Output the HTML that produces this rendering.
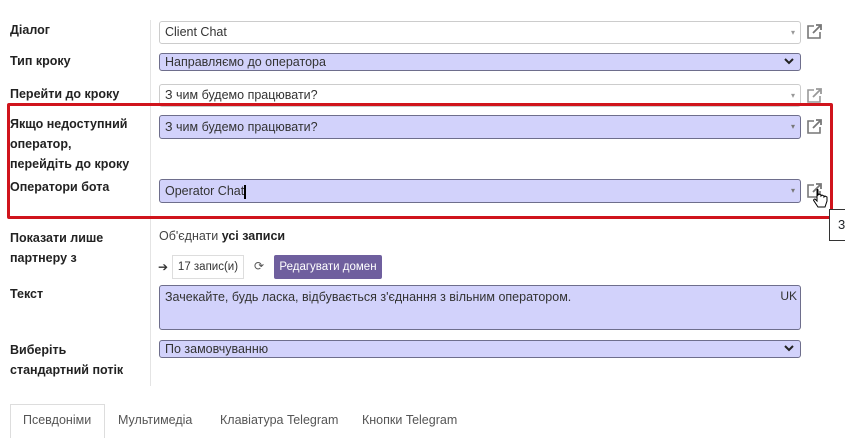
<!DOCTYPE html>
<html><head><meta charset="utf-8"><style>
body{margin:0;width:845px;height:436px;background:#fff;font-family:"Liberation Sans","DejaVu Sans",sans-serif;position:relative;overflow:hidden;color:#212529}
.a{position:absolute}
.l{position:absolute;left:10px;font-weight:bold;font-size:12.5px;color:#222;line-height:20px}
.in{position:absolute;left:159px;width:642px;box-sizing:border-box;font-size:12.5px;padding-left:5px;border:1px solid #ccc;border-radius:3px;background:#fff;color:#333}
.p{background:#d2d2fb;border-color:#6e6e8c}
.dd{position:absolute;right:5px;top:0;font-size:8px;color:#999}
.ext{position:absolute;left:806px;width:17px;height:17px}
.chev{position:absolute;right:6px;top:3px}
</style></head><body>
<div class="a" style="left:150px;top:20px;width:1px;height:366px;background:#e4e4e4"></div>

<div class="l" style="top:20px">Діалог</div>
<div class="l" style="top:51px">Тип кроку</div>
<div class="l" style="top:84px">Перейти до кроку</div>
<div class="l" style="top:114px">Якщо недоступний<br>оператор,<br>перейдіть до кроку</div>
<div class="l" style="top:177px">Оператори бота</div>
<div class="l" style="top:228px">Показати лише<br>партнеру з</div>
<div class="l" style="top:284px">Текст</div>
<div class="l" style="top:340px">Виберіть<br>стандартний потік</div>

<div class="in" style="top:21px;height:23px;line-height:21px">Client Chat<span class="dd" style="line-height:21px">▾</span></div>
<div class="in p" style="top:53px;height:18px;line-height:16px">Направляємо до оператора<svg class="chev" width="10" height="8" viewBox="0 0 10 8"><path d="M1 2l4 4 4-4" stroke="#222" stroke-width="2" fill="none"/></svg></div>
<div class="in" style="top:84px;height:23px;line-height:21px">З чим будемо працювати?<span class="dd" style="line-height:21px">▾</span></div>
<div class="in p" style="top:115px;height:24px;line-height:22px">З чим будемо працювати?<span class="dd" style="line-height:22px;color:#777">▾</span></div>
<div class="in p" style="top:179px;height:24px;line-height:22px">Operator Chat<span style="border-left:2px solid #000;height:14px;display:inline-block;vertical-align:middle"></span><span class="dd" style="line-height:22px;color:#777">▾</span></div>

<svg class="ext" style="top:23px" viewBox="0 0 17 17"><path d="M8 3H2v12h12V9" stroke="#777" stroke-width="1.6" fill="none"/><path d="M7 10l8-8M10 2h5v5" stroke="#777" stroke-width="1.8" fill="none"/></svg>
<svg class="ext" style="top:87px" viewBox="0 0 17 17"><path d="M8 3H2v12h12V9" stroke="#999" stroke-width="1.6" fill="none"/><path d="M7 10l8-8M10 2h5v5" stroke="#999" stroke-width="1.8" fill="none"/></svg>
<svg class="ext" style="top:118px" viewBox="0 0 17 17"><path d="M8 3H2v12h12V9" stroke="#777" stroke-width="1.6" fill="none"/><path d="M7 10l8-8M10 2h5v5" stroke="#777" stroke-width="1.8" fill="none"/></svg>
<svg class="ext" style="top:182px" viewBox="0 0 17 17"><path d="M8 3H2v12h12V9" stroke="#777" stroke-width="1.6" fill="none"/><path d="M7 10l8-8M10 2h5v5" stroke="#777" stroke-width="1.8" fill="none"/></svg>
<svg class="a" style="left:812px;top:188px" width="16" height="22" viewBox="0 0 16 22"><path d="M5 2v11l-2-2c-1 0-2 1-1 2l4 6h7l2-6V9l-2-1-1 1V8l-2-1-1 1V7l-2-1-1 1V2C6 1 5 1 5 2z" fill="#fff" stroke="#000" stroke-width="1"/></svg>

<div class="a" style="left:7px;top:103px;width:820px;height:110px;border:3px solid #d0141c;border-radius:2px"></div>
<div class="a" style="left:829px;top:209px;width:30px;height:30px;border:1px solid #333;background:#fff;font-size:13px;line-height:30px;padding-left:8px">3</div>

<div class="a" style="left:159px;top:229px;font-size:12.5px;color:#444">Об'єднати <b style="color:#222">усі записи</b></div>
<div class="a" style="left:158px;top:260px;font-size:12px;color:#333">➔</div>
<div class="a" style="left:172px;top:255px;width:72px;height:24px;border:1px solid #ddd;box-sizing:border-box;font-size:11.5px;line-height:22px;text-align:center;color:#333">17 запис(и)</div>
<div class="a" style="left:254px;top:259px;font-size:12px;color:#555">⟳</div>
<div class="a" style="left:274px;top:255px;width:108px;height:24px;background:#6f5f9e;border-radius:2px;color:#fff;font-size:11.5px;line-height:24px;text-align:center">Редагувати домен</div>

<div class="in p" style="top:285px;height:45px;line-height:20px;padding-top:1px">Зачекайте, будь ласка, відбувається з'єднання з вільним оператором.<span style="position:absolute;right:3px;top:0;font-size:12px">UK</span></div>
<div class="in p" style="top:340px;height:18px;line-height:16px">По замовчуванню<svg class="chev" width="10" height="8" viewBox="0 0 10 8"><path d="M1 2l4 4 4-4" stroke="#222" stroke-width="2" fill="none"/></svg></div>

<div class="a" style="left:10px;top:404px;width:95px;height:34px;border:1px solid #ddd;border-bottom:none;box-sizing:border-box"></div>
<div class="a" style="left:23px;top:413px;font-size:12.5px;color:#555">Псевдоніми</div>
<div class="a" style="left:118px;top:413px;font-size:12.5px;color:#555">Мультимедіа</div>
<div class="a" style="left:220px;top:413px;font-size:12.5px;color:#555">Клавіатура Telegram</div>
<div class="a" style="left:362px;top:413px;font-size:12.5px;color:#555">Кнопки Telegram</div>
</body></html>
